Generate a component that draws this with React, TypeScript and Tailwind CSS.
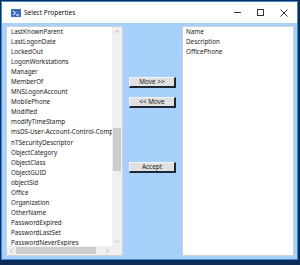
import React from "react";

const leftItems = [
  "LastKnownParent",
  "LastLogonDate",
  "LockedOut",
  "LogonWorkstations",
  "Manager",
  "MemberOf",
  "MNSLogonAccount",
  "MobilePhone",
  "Modified",
  "modifyTimeStamp",
  "msDS-User-Account-Control-Computed",
  "nTSecurityDescriptor",
  "ObjectCategory",
  "ObjectClass",
  "ObjectGUID",
  "objectSid",
  "Office",
  "Organization",
  "OtherName",
  "PasswordExpired",
  "PasswordLastSet",
  "PasswordNeverExpires",
];

const rightItems = ["Name", "Description", "OfficePhone"];

function Chevron({ dir }: { dir: "up" | "down" | "left" | "right" }) {
  const d = {
    up: "M1 4 L3.5 1.5 L6 4",
    down: "M1 1.5 L3.5 4 L6 1.5",
    left: "M4 1 L1.5 3.5 L4 6",
    right: "M1.5 1 L4 3.5 L1.5 6",
  }[dir];
  const vb = dir === "up" || dir === "down" ? "0 0 7 5.5" : "0 0 5.5 7";
  return (
    <svg
      viewBox={vb}
      className={dir === "up" || dir === "down" ? "w-[6px] h-[5px]" : "w-[5px] h-[6px]"}
    >
      <path d={d} fill="none" stroke="#b0b0b0" strokeWidth="1" />
    </svg>
  );
}

function Button({ label }: { label: string }) {
  return (
    <button className="w-[47px] h-[11px] bg-[#e1e1e1] border-t border-l border-t-[#f4f4f4] border-l-[#f4f4f4] border-b-2 border-r-2 border-b-[#1c2836] border-r-[#1c2836] text-[6.4px] leading-none text-[#222] flex items-center justify-center">
      {label}
    </button>
  );
}

export default function App() {
  return (
    <div
      className="w-[300px] h-[265px] bg-[#0d2c57] pt-px pl-px overflow-hidden"
      style={{ fontFamily: '"Noto Sans", "Open Sans", sans-serif' }}
    >
      {/* Window */}
      <div className="w-[297px] h-[259px] border border-[#3a8ad6] bg-[#a7d1fb] flex flex-col">
        {/* Title bar */}
        <div className="h-[21px] bg-white flex items-center shrink-0">
          <svg viewBox="0 0 10 8" className="ml-[9px] w-[10px] h-[8px]">
            <rect x="0" y="0" width="10" height="8" fill="#3b6fb6" />
            <path d="M2 2 L4.5 4 L2 6" fill="none" stroke="#fff" strokeWidth="1" />
            <path d="M5 6 H8" stroke="#fff" strokeWidth="1" />
          </svg>
          <span className="ml-[3px] text-[6.5px] text-[#111]">Select Properties</span>
          <div className="ml-auto flex items-center">
            <div className="w-[23px] flex justify-center">
              <div className="w-[7px] h-px bg-[#333]" />
            </div>
            <div className="w-[23px] flex justify-center">
              <div className="w-[7px] h-[7px] border border-[#333]" />
            </div>
            <div className="w-[23px] flex justify-center mr-[2px]">
              <svg viewBox="0 0 8 8" className="w-[8px] h-[8px]">
                <path d="M0.5 0.5 L7.5 7.5 M7.5 0.5 L0.5 7.5" stroke="#333" strokeWidth="1" />
              </svg>
            </div>
          </div>
        </div>

        {/* Client area */}
        <div className="flex-1 flex pt-[3px] pb-[3px] pl-[4px] pr-[3px]">
          {/* Left list */}
          <div className="w-[117px] h-[230px] bg-white border border-[#c8d3de] flex flex-col">
            <div className="flex flex-1 min-h-0">
              <div className="flex-1 overflow-hidden pl-[4px]">
                {leftItems.map((t) => (
                  <div key={t} className="h-[10.05px] text-[6.3px] leading-[10px] text-[#1a1a1a] whitespace-nowrap">
                    {t}
                  </div>
                ))}
              </div>
              {/* vertical scrollbar */}
              <div className="w-[10px] bg-[#f0f0f0] flex flex-col items-center">
                <div className="h-[9px] flex items-center justify-center">
                  <Chevron dir="up" />
                </div>
                <div className="flex-1 w-full flex flex-col">
                  <div className="h-[92px]" />
                  <div className="h-[43px] mx-[1px] bg-[#cdcdcd]" />
                </div>
                <div className="h-[9px] flex items-center justify-center">
                  <Chevron dir="down" />
                </div>
              </div>
            </div>
            {/* horizontal scrollbar */}
            <div className="h-[9px] flex shrink-0">
              <div className="flex-1 bg-[#f0f0f0] flex items-center">
                <div className="w-[9px] flex justify-center">
                  <Chevron dir="left" />
                </div>
                <div className="w-[80px] h-[7px] bg-[#cdcdcd]" />
                <div className="ml-auto w-[9px] flex justify-center">
                  <Chevron dir="right" />
                </div>
              </div>
              <div className="w-[10px] bg-[#f0f0f0]" />
            </div>
          </div>

          {/* Buttons */}
          <div className="w-[59px] flex flex-col items-center pt-[51px]">
            <Button label="Move >>" />
            <div className="h-[9px]" />
            <Button label="<< Move" />
            <div className="h-[54px]" />
            <Button label="Accept" />
          </div>

          {/* Right list */}
          <div className="w-[112px] h-[230px] bg-white border border-[#c8d3de] pl-[3px]">
            {rightItems.map((t) => (
              <div key={t} className="h-[10.05px] text-[6.3px] leading-[10px] text-[#1a1a1a] whitespace-nowrap">
                {t}
              </div>
            ))}
          </div>
        </div>
      </div>
    </div>
  );
}
